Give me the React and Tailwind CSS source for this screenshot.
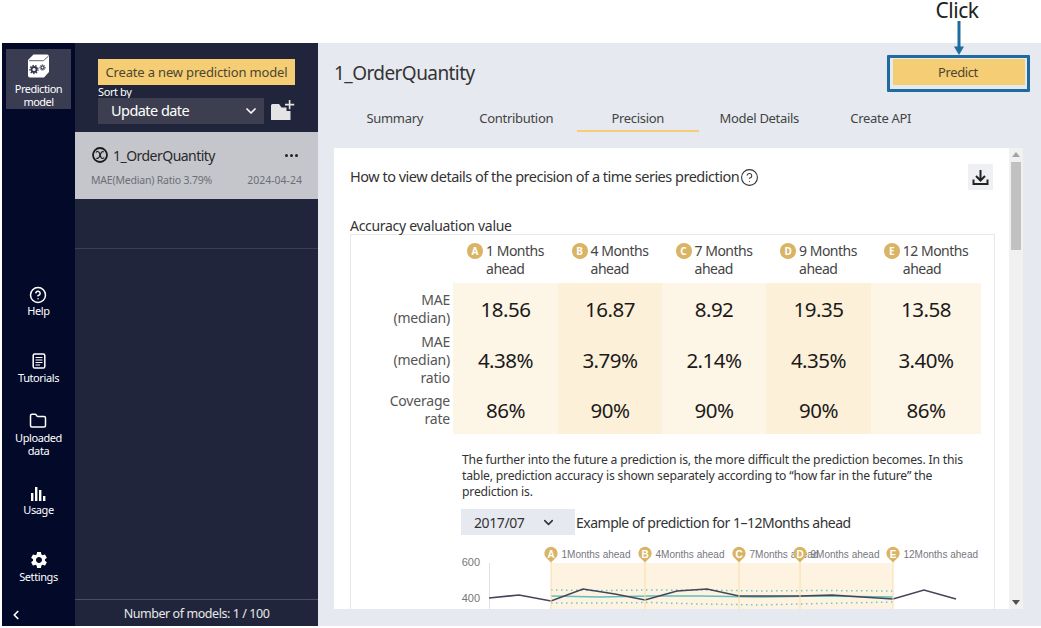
import { Fragment } from "react";
import { ChevronDown, ChevronLeft, CircleHelp, Folder } from "lucide-react";
import { MdSettings } from "react-icons/md";

const columns = [
  { mark: "A", label: "1 Months", values: ["18.56", "4.38%", "86%"], bg: "bg-[#fdf5e6]" },
  { mark: "B", label: "4 Months", values: ["16.87", "3.79%", "90%"], bg: "bg-[#fcf0d9]" },
  { mark: "C", label: "7 Months", values: ["8.92", "2.14%", "90%"], bg: "bg-[#fdf5e6]" },
  { mark: "D", label: "9 Months", values: ["19.35", "4.35%", "90%"], bg: "bg-[#fcf0d9]" },
  { mark: "E", label: "12 Months", values: ["13.58", "3.40%", "86%"], bg: "bg-[#fdf5e6]" },
];

const rowLabels = [
  { text: ["MAE", "(median)"], h: "h-[51px]" },
  { text: ["MAE", "(median)", "ratio"], h: "h-[51px]" },
  { text: ["Coverage", "rate"], h: "h-[49px]" },
];

const tabs = ["Summary", "Contribution", "Precision", "Model Details", "Create API"];

const CubeIcon = () => (
  <svg width="21" height="24" viewBox="0 0 21 24">
    <path d="M0 6 L5.5 0.5 H19 Q21 0.5 21 2.5 V18 L16 23.5 H2 Q0 23.5 0 21.5 Z" fill="#fff" />
    <path d="M1 6.7 H15.5 L20.5 2" fill="none" stroke="#3a3d52" strokeWidth="0.8" />
    <circle cx="6" cy="15.5" r="2.5" fill="none" stroke="#33364a" strokeWidth="1.8" />
    <circle cx="6" cy="15.5" r="4" fill="none" stroke="#33364a" strokeWidth="1.4" strokeDasharray="1.4 1.4" />
    <circle cx="14.5" cy="13.5" r="1.6" fill="none" stroke="#33364a" strokeWidth="1.2" />
    <circle cx="14.5" cy="13.5" r="2.7" fill="none" stroke="#33364a" strokeWidth="1" strokeDasharray="1 1" />
  </svg>
);

const TutorialsIcon = () => (
  <svg width="16" height="16" viewBox="0 0 16 16" fill="none" stroke="#fff">
    <rect x="2.2" y="1" width="11.6" height="14" rx="1.6" strokeWidth="1.5" />
    <path d="M4.5 4.5 H11.5 M4.5 7 H11.5 M4.5 9.5 H11.5 M4.5 12 H9" strokeWidth="1.2" />
  </svg>
);

const UsageIcon = () => (
  <svg width="16" height="14" viewBox="0 0 16 14" fill="#fff">
    <rect x="1" y="6" width="2.4" height="8" />
    <rect x="5" y="0" width="2.4" height="14" />
    <rect x="9" y="3" width="2.4" height="11" />
    <rect x="13" y="9" width="2.4" height="5" />
  </svg>
);

const ModelBadge = () => (
  <svg width="16" height="16" viewBox="0 0 16 16" fill="none" stroke="#1c1c1c">
    <circle cx="8" cy="8" r="7" strokeWidth="1.8" />
    <path d="M4 5.6 C4.6 4 6.6 4.2 7.4 6 L8.8 10 C9.4 11.8 11.4 12 12 10.4" strokeWidth="1.2" />
    <path d="M4.4 11 C5.6 12 6.6 11 7.4 9.6 L8.8 6.4 C9.6 4.8 10.6 4 11.8 5" strokeWidth="1.2" />
  </svg>
);

const FolderPlus = () => (
  <svg width="26" height="22" viewBox="0 0 26 22" fill="#e4e4e4">
    <path d="M1 5.5 Q1 4 2.5 4 H9 L11.5 7.5 H16.5 V11 H20.5 V19.5 Q20.5 20 20 20 H1.5 Q1 20 1 19.5 Z" />
    <path d="M18.8 0 H20.4 V3.8 H24.2 V5.4 H20.4 V9.2 H18.8 V5.4 H15 V3.8 H18.8 Z" />
  </svg>
);

const DownloadIcon = () => (
  <svg width="17" height="17" viewBox="0 0 17 17" fill="none" stroke="#222" strokeWidth="2">
    <path d="M8.5 1 V11 M4 7 L8.5 11.5 L13 7" />
    <path d="M1.5 10.5 V15 H15.5 V10.5" />
  </svg>
);

const NavItem = ({ icon, lines, className, gap }) => (
  <div className={`flex flex-col items-center text-[11px] leading-[13px] tracking-[-0.4px] text-white ${className}`}>
    {icon}
    <div className={`flex flex-col items-center ${gap}`}>
      {lines.map((line) => (
        <span key={line}>{line}</span>
      ))}
    </div>
  </div>
);

const markers = [
  { x: 551, mark: "A", label: "1Months ahead" },
  { x: 645, mark: "B", label: "4Months ahead" },
  { x: 739, mark: "C", label: "7Months ahead" },
  { x: 800, mark: "D", label: "9Months ahead" },
  { x: 893, mark: "E", label: "12Months ahead" },
];

// chart is drawn in page coordinates, the viewBox shifts them into the svg
const Chart = () => (
  <svg width="545" height="65" viewBox="450 545 545 65" className="block">
    <rect x="551" y="563" width="342" height="47" fill="#fdf3e0" />
    <line x1="489.5" y1="563" x2="489.5" y2="610" stroke="#e2e2e2" />
    <text x="480" y="566" textAnchor="end" fontSize="11" fill="#777" fontFamily="Liberation Sans">600</text>
    <text x="480" y="602" textAnchor="end" fontSize="11" fill="#777" fontFamily="Liberation Sans">400</text>
    <polyline points="551,590 600,590.5 650,590 700,590 760,591 820,590.5 893,591" fill="none" stroke="#6cc9c6" strokeWidth="1.5" strokeDasharray="1.5 3.5" />
    <polyline points="551,603 600,603 650,602.5 700,604 760,605 820,603.5 893,602" fill="none" stroke="#6cc9c6" strokeWidth="1.5" strokeDasharray="1.5 3.5" />
    <polyline points="551,596 600,597 650,596 700,596 760,597 820,596 893,597" fill="none" stroke="#5cc0bd" strokeWidth="1.5" />
    <polyline points="489,598 519,595 551,601 583,589 615,594 645,600 677,591 707,589 739,596 770,596 800,596 832,595 862,597 893,599 924,590 956,599" fill="none" stroke="#44455a" strokeWidth="1.6" />
    {markers.map((m) => (
      <g key={m.mark}>
        <line x1={m.x} y1="558" x2={m.x} y2="610" stroke="#f8dea8" strokeWidth="1" />
        <path d={`M${m.x} 562.5 L${m.x - 5.5} 557 A6.6 6.6 0 1 1 ${m.x + 5.5} 557 Z`} fill="#dab465" />
        <text x={m.x} y="557.5" textAnchor="middle" fontSize="10" fontWeight="700" fill="#fff" fontFamily="Liberation Sans">{m.mark}</text>
        <text x={m.x + 10.5} y="557.5" fontSize="10" fill="#77777f" fontFamily="Liberation Sans">{m.label}</text>
      </g>
    ))}
  </svg>
);

const App = () => {
  return (
    <div className="relative h-[628px] w-[1041px] overflow-hidden bg-white pt-[43px] pb-[2px] pl-[2px] font-['Noto_Sans',sans-serif] text-[#333]">
      <div className="flex h-full">
        {/* icon rail */}
        <aside className="flex w-[73px] shrink-0 flex-col items-center bg-[#030929] pt-[6px]">
          <div className="flex h-[60px] w-[65px] flex-col items-center bg-[#3a3d52] pt-[5px] text-center text-[11px] leading-[13px] tracking-[-0.5px] text-white">
            <CubeIcon />
            <span className="mt-[4px]">Prediction</span>
            <span>model</span>
          </div>
          <NavItem className="mt-[177px]" gap="mt-0" lines={["Help"]} icon={<CircleHelp size={18} className="text-white" />} />
          <NavItem className="mt-[36px]" gap="mt-[2px]" lines={["Tutorials"]} icon={<TutorialsIcon />} />
          <NavItem className="mt-[28px]" gap="mt-[1px]" lines={["Uploaded", "data"]} icon={<Folder size={18} className="text-white" />} />
          <NavItem className="mt-[30px]" gap="mt-[2px]" lines={["Usage"]} icon={<UsageIcon />} />
          <NavItem className="mt-[34px]" gap="mt-0" lines={["Settings"]} icon={<MdSettings size={20} className="text-white" />} />
          <div className="mt-auto mb-[4px] w-full pl-[7px] text-white">
            <ChevronLeft size={14} strokeWidth={3} />
          </div>
        </aside>

        {/* model list */}
        <section className="flex w-[243px] shrink-0 flex-col bg-[#20253b]">
          <div className="h-[89px] pt-[16px] pl-[23px]">
            <button className="block h-[26px] w-[197px] bg-[#f4cd74] pt-[2px] text-[13px] tracking-[-0.17px] text-[#4d4630]">Create a new prediction model</button>
            <div className="mt-[1px] h-[12px] text-[11px] leading-[12px] tracking-[-0.4px] text-white">Sort by</div>
            <div className="flex items-center">
              <div className="flex h-[26px] w-[166px] items-center justify-between bg-[#3d3f50] pr-[5px] pl-[13px] text-[14.5px] tracking-[-0.55px] text-white">
                Update date
                <ChevronDown size={16} strokeWidth={2.5} />
              </div>
              <div className="ml-[6px]">
                <FolderPlus />
              </div>
            </div>
          </div>
          <div className="h-[67px] bg-[#c4c6cb] px-[16px] pt-[13px]">
            <div className="flex h-[20px] items-center justify-between text-[14px] tracking-[-0.53px] text-[#2a2a2a]">
              <div className="flex items-center gap-[5px] pl-[1px]">
                <ModelBadge />
                1_OrderQuantity
              </div>
              <div className="mr-[4px] flex gap-[2px]">
                <span className="h-[3px] w-[3px] rounded-full bg-[#222]" />
                <span className="h-[3px] w-[3px] rounded-full bg-[#222]" />
                <span className="h-[3px] w-[3px] rounded-full bg-[#222]" />
              </div>
            </div>
            <div className="mt-[8px] flex justify-between text-[10.5px] text-[#6d6f77]">
              <span className="tracking-[-0.2px]">MAE(Median) Ratio 3.79%</span>
              <span>2024-04-24</span>
            </div>
          </div>
          <div className="h-[50px] border-b border-[#3a3f55]" />
          <div className="flex-1" />
          <div className="flex h-[27px] items-center justify-center border-t border-[#4a4e63] pt-[3px] text-[12.5px] tracking-[-0.44px] text-[#e8e8e8]">Number of models: 1 / 100</div>
        </section>

        {/* detail */}
        <main className="flex min-w-0 flex-1 flex-col bg-[#e6e9ef] pl-[16px]">
          <div className="flex h-[60px] shrink-0 items-center justify-between pr-[16px]">
            <h1 className="text-[19px] tracking-[-0.57px] text-[#333]">1_OrderQuantity</h1>
            <button className="mb-[2px] h-[26px] w-[132px] bg-[#f4cd74] pt-[2px] pr-[2px] text-[13px] tracking-[-0.4px] text-[#4d4630]">Predict</button>
          </div>
          <div className="flex h-[29px] shrink-0">
            {tabs.map((tab) => (
              <div
                key={tab}
                className={`flex h-full w-[121.5px] items-center justify-center border-b-[2px] pt-[4px] text-[13px] tracking-[-0.3px] text-[#444] ${
                  tab === "Precision" ? "border-[#f4cd74]" : "border-transparent"
                }`}
              >
                {tab}
              </div>
            ))}
          </div>
          <div className="mt-[16px] flex h-[461px] w-[689px] shrink-0 overflow-hidden bg-white">
            <div className="min-w-0 flex-1 pl-[16px]">
              <div className="flex h-[58px] items-center justify-between pr-[16px]">
                <div className="flex items-center gap-[1px] text-[14.5px] tracking-[-0.5px] text-[#333]">
                  How to view details of the precision of a time series prediction
                  <CircleHelp size={19} strokeWidth={1.4} />
                </div>
                <div className="flex h-[26px] w-[25px] items-center justify-center bg-[#eef0f3]">
                  <DownloadIcon />
                </div>
              </div>
              <div className="mt-[10px] h-[18px] text-[14px] leading-[20px] tracking-[-0.3px] text-[#333]">Accuracy evaluation value</div>
              <div className="mr-[14px] h-[400px] border border-[#e8e8e8] pt-[7px]">
                <div className="grid grid-cols-[102px_105px_104px_104px_105px_110px]">
                  <div className="h-[41px]" />
                  {columns.map((col) => (
                    <div key={col.mark} className="flex h-[41px] justify-center text-[14px] leading-[18px] tracking-[-0.5px] text-[#444]">
                      <div className="flex gap-[3px]">
                        <span className="mt-[1px] flex h-[16px] w-[16px] items-center justify-center rounded-full bg-[#dab465] text-[10px] font-bold tracking-normal text-white">{col.mark}</span>
                        <span className="text-left">
                          {col.label}
                          <br />
                          ahead
                        </span>
                      </div>
                    </div>
                  ))}
                  {rowLabels.map((row, i) => (
                    <Fragment key={row.text.join()}>
                      <div className={`flex ${row.h} flex-col justify-center pr-[3px] text-right text-[14px] leading-[18px] tracking-[-0.2px] text-[#555]`}>
                        {row.text.map((line) => (
                          <span key={line}>{line}</span>
                        ))}
                      </div>
                      {columns.map((col) => (
                        <div key={col.mark} className={`flex ${row.h} items-center justify-center ${col.bg} pt-[1px] text-[20.5px] tracking-[-0.5px] text-[#1a1a1a]`}>
                          {col.values[i]}
                        </div>
                      ))}
                    </Fragment>
                  ))}
                </div>
                <p className="mt-[18px] ml-[111px] w-[510px] text-[12.2px] leading-[16px] tracking-[-0.2px] text-[#333]">
                  The further into the future a prediction is, the more difficult the prediction becomes. In this table, prediction accuracy is shown separately according to “how far in the future” the prediction is.
                </p>
                <div className="mt-[9px] ml-[110px] flex items-center">
                  <div className="flex h-[26px] w-[114px] items-center justify-between bg-[#e6e9ef] pr-[19px] pl-[13px] text-[14px] tracking-[-0.4px] text-[#333]">
                    2017/07
                    <ChevronDown size={15} strokeWidth={2.5} />
                  </div>
                  <span className="ml-[1px] text-[14px] tracking-[-0.5px] text-[#333]">Example of prediction for 1–12Months ahead</span>
                </div>
                <div className="mt-[10px] ml-[99px]">
                  <Chart />
                </div>
              </div>
            </div>
            {/* scrollbar */}
            <div className="flex w-[14px] shrink-0 flex-col items-center bg-[#f1f1f1] pt-[4px]">
              <div className="h-0 w-0 border-x-[4px] border-b-[5px] border-x-transparent border-b-[#a3a3a3]" />
              <div className="mt-[5px] h-[88px] w-[10px] bg-[#c1c1c1]" />
              <div className="mt-auto mb-[4px] h-0 w-0 border-x-[4px] border-t-[5px] border-x-transparent border-t-[#505050]" />
            </div>
          </div>
        </main>
      </div>

      {/* call-out drawn over the screenshot */}
      <div className="absolute top-0 left-[917px] h-[20px] w-[80px] text-center text-[21px] leading-[20px] tracking-[-0.5px] text-[#222]">Click</div>
      <svg width="12" height="34" viewBox="0 0 12 34" className="absolute top-[21px] left-[953px]">
        <path d="M6 0 V27" stroke="#1f6a9e" strokeWidth="3" />
        <path d="M1 25.5 H11 L6 34 Z" fill="#1f6a9e" />
      </svg>
      <div className="absolute top-[55px] left-[887px] h-[37px] w-[143px] rounded-[1px] border-[3px] border-[#1f6a9e]" />
    </div>
  );
};

export default App;
